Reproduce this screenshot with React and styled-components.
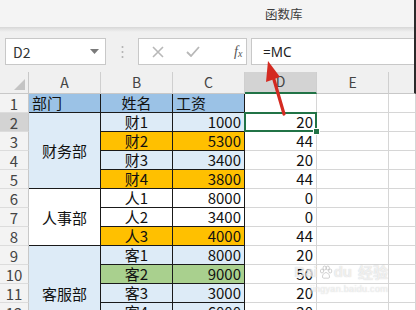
import React from 'react';
import styled, { createGlobalStyle } from 'styled-components';

const BLUE = '#9bc2e6';
const LIGHT = '#ddebf7';
const ORANGE = '#ffc000';
const GREEN = '#a9d08e';
const WHITE = '#ffffff';
const GRID = '#d6d6d6';
const SEL = '#217346';

const GlobalStyle = createGlobalStyle`
  html, body { margin: 0; padding: 0; background: #fff; }
  body { font-family: "Noto Sans CJK SC", "Noto Sans", sans-serif; }
`;

const Page = styled.div`
  position: relative;
  width: 416px;
  height: 310px;
  overflow: hidden;
  display: flex;
  flex-direction: column;
  background: #fff;
`;

const Top = styled.div`
  border-right: 2px solid #2b2b2b;
`;

const Ribbon = styled.div`
  height: 27px;
  background: #f4f4f4;
  border-bottom: 1px solid #d9d9d9;
  display: flex;
  align-items: center;
  padding-left: 265px;
  font-size: 12.5px;
  color: #3c3c3c;
`;

const FormulaBar = styled.div`
  height: 44px;
  box-sizing: border-box;
  padding: 10px 0 0 5px;
  background: linear-gradient(#dcdcdc, #f0f0f0 4px, #f0f0f0);
  display: flex;
  align-items: flex-start;
`;

const Box = styled.div`
  height: 27px;
  box-sizing: border-box;
  background: #fff;
  border: 1px solid #c8c8c8;
  display: flex;
  align-items: center;
`;

const NameBox = styled(Box)`
  width: 101px;
  padding: 0 6px 0 7px;
  justify-content: space-between;
  font-size: 14px;
  color: #333;
`;

const Dots = styled.div`
  width: 32px;
  height: 27px;
  display: flex;
  align-items: center;
  justify-content: center;
`;

const FnBox = styled(Box)`
  width: 109px;
  padding: 0 0 0 13px;
  gap: 22px;
`;

const Fx = styled.span`
  margin-left: 12px;
  font-family: "Liberation Serif", serif;
  font-style: italic;
  font-size: 14px;
  color: #555;
  sub { font-size: 10px; vertical-align: -1px; }
`;

const InputBox = styled(Box)`
  flex: 1;
  margin-left: 4px;
  border-right: none;
  padding-left: 11px;
  font-family: "Noto Sans", sans-serif;
  font-size: 13.5px;
  color: #222;
`;

const Sheet = styled.div`
  display: grid;
  grid-template-columns: 29px repeat(5, 72px) 1fr;
  grid-template-rows: 22px;
  grid-auto-rows: 19px;
`;

const Corner = styled.div`
  background: #f0f0f0;
  border-right: 1px solid #c8c8c8;
  border-bottom: 1px solid #c8c8c8;
  position: relative;
  &::after {
    content: '';
    position: absolute;
    right: 3px;
    bottom: 3px;
    width: 11px;
    height: 11px;
    background: #c4c4c4;
    clip-path: polygon(100% 0, 100% 100%, 0 100%);
  }
`;

const ColHead = styled.div`
  box-sizing: border-box;
  background: ${p => (p.$active ? '#d3d3d3' : '#f0f0f0')};
  border-right: ${p => (p.$edge ? '2px solid #2b2b2b' : '1px solid #cfcfcf')};
  border-bottom: ${p => (p.$active ? `2px solid ${SEL}` : '1px solid #c8c8c8')};
  display: flex;
  align-items: flex-end;
  justify-content: center;
  padding-bottom: 1px;
  font-size: 14px;
  line-height: 19px;
  color: #444;
`;

const RowHead = styled.div`
  box-sizing: border-box;
  background: ${p => (p.$active ? '#d3d3d3' : '#f3f3f3')};
  border-right: 1px solid #c8c8c8;
  border-bottom: 1px solid #dcdcdc;
  text-align: center;
  font-size: 15px;
  line-height: 19px;
  color: #444;
`;

const Cell = styled.div`
  box-sizing: border-box;
  position: relative;
  background: ${p => p.$bg || WHITE};
  border-right: 1px solid ${p => (p.$boxed ? '#1a1a1a' : GRID)};
  border-bottom: 1px solid ${p => (p.$boxed ? '#1a1a1a' : GRID)};
  grid-row: ${p => (p.$span ? `span ${p.$span}` : 'auto')};
  display: flex;
  align-items: ${p => (p.$span ? 'center' : 'flex-end')};
  justify-content: ${p => p.$align || 'flex-start'};
  padding: 0 3px;
  font-size: 15px;
  line-height: 19px;
  color: #111;
  white-space: nowrap;

  ${p => p.$selected && `
    &::before {
      content: '';
      position: absolute;
      inset: -1px;
      border: 2px solid ${SEL};
      z-index: 2;
    }
    &::after {
      content: '';
      position: absolute;
      right: -4px;
      bottom: -4px;
      width: 5px;
      height: 5px;
      background: ${SEL};
      border: 1px solid #fff;
      z-index: 3;
    }
  `}
`;

const Overlay = styled.svg`
  position: absolute;
  left: 0;
  top: 0;
  pointer-events: none;
  z-index: 5;
`;

const Watermark = styled.div`
  position: absolute;
  right: 28px;
  top: 262px;
  z-index: 4;
  white-space: nowrap;
  color: rgba(255, 255, 255, 0.7);
  text-shadow: 0 0 1px rgba(130, 130, 130, 0.45);
  pointer-events: none;
  display: flex;
  flex-direction: column;
  align-items: flex-end;
`;

const MarkTop = styled.div`
  display: flex;
  align-items: center;
  gap: 1px;
  font-family: "Liberation Sans", sans-serif;
  font-weight: bold;
  font-size: 15px;
  line-height: 20px;
`;

const MarkCn = styled.span`
  font-family: "Noto Sans CJK SC", sans-serif;
  font-weight: bold;
  font-size: 15px;
  margin-left: 5px;
`;

const MarkUrl = styled.div`
  font-family: "Liberation Sans", sans-serif;
  font-size: 9px;
  letter-spacing: 0.3px;
  margin-top: 2px;
`;

const groups = {
  2: { dept: '财务部', bg: LIGHT, span: 4 },
  6: { dept: '人事部', bg: WHITE, span: 3 },
  9: { dept: '客服部', bg: LIGHT, span: 5 },
};

const people = [
  ['财1', 1000, 20, LIGHT],
  ['财2', 5300, 44, ORANGE],
  ['财3', 3400, 20, LIGHT],
  ['财4', 3800, 44, ORANGE],
  ['人1', 8000, 0, WHITE],
  ['人2', 3400, 0, WHITE],
  ['人3', 4000, 44, ORANGE],
  ['客1', 8000, 20, LIGHT],
  ['客2', 9000, 50, GREEN],
  ['客3', 3000, 20, LIGHT],
  ['客4', 6000, 20, LIGHT],
  ['客5', 5000, 20, LIGHT],
];

function Paw() {
  return (
    <svg width="14" height="14" viewBox="0 0 14 14">
      <g fill="rgba(255,255,255,0.6)" stroke="rgba(130,130,130,0.45)" strokeWidth="0.8">
        <ellipse cx="3" cy="6" rx="1.6" ry="2" />
        <ellipse cx="5.6" cy="3" rx="1.6" ry="2" />
        <ellipse cx="8.8" cy="3" rx="1.6" ry="2" />
        <ellipse cx="11.2" cy="6" rx="1.6" ry="2" />
        <path d="M7 7.5c-2 0-4 3-3.5 4.8.5 1.4 2.4.8 3.5.8s3 .6 3.5-.8C11 10.5 9 7.5 7 7.5z" />
      </g>
    </svg>
  );
}

export default function App() {
  return (
    <>
      <GlobalStyle />
      <Page>
        <Top>
          <Ribbon>函数库</Ribbon>
          <FormulaBar>
            <NameBox>
              <span>D2</span>
              <svg width="9" height="5" viewBox="0 0 9 5">
                <polygon points="0,0 9,0 4.5,5" fill="#7a7a7a" />
              </svg>
            </NameBox>
            <Dots>
              <svg width="3" height="14" viewBox="0 0 3 14">
                <circle cx="1.5" cy="2" r="1" fill="#b0b0b0" />
                <circle cx="1.5" cy="7" r="1" fill="#b0b0b0" />
                <circle cx="1.5" cy="12" r="1" fill="#b0b0b0" />
              </svg>
            </Dots>
            <FnBox>
              <svg width="12" height="12" viewBox="0 0 12 12">
                <path d="M1 1L11 11M11 1L1 11" stroke="#b8b8b8" strokeWidth="1.6" />
              </svg>
              <svg width="14" height="11" viewBox="0 0 14 11">
                <path d="M1 6l4 4L13 1" fill="none" stroke="#b8b8b8" strokeWidth="1.8" />
              </svg>
              <Fx>f<sub>x</sub></Fx>
            </FnBox>
            <InputBox>=MC</InputBox>
          </FormulaBar>
        </Top>

        <Sheet>
          <Corner />
          {['A', 'B', 'C', 'D', 'E'].map(c => (
            <ColHead key={c} $active={c === 'D'}>{c}</ColHead>
          ))}
          <ColHead $edge />

          <RowHead>1</RowHead>
          <Cell $boxed $bg={BLUE}>部门</Cell>
          <Cell $boxed $bg={BLUE} $align="center">姓名</Cell>
          <Cell $boxed $bg={BLUE}>工资</Cell>
          <Cell />
          <Cell />
          <Cell />

          {people.map(([name, pay, d, bg], i) => {
            const r = i + 2;
            const g = groups[r];
            return (
              <React.Fragment key={r}>
                <RowHead $active={r === 2}>{r}</RowHead>
                {g && (
                  <Cell $boxed $bg={g.bg} $span={g.span} $align="center">{g.dept}</Cell>
                )}
                <Cell $boxed $bg={bg} $align="center">{name}</Cell>
                <Cell $boxed $bg={bg} $align="flex-end">{pay}</Cell>
                <Cell $align="flex-end" $selected={r === 2}>{d}</Cell>
                <Cell />
                <Cell />
              </React.Fragment>
            );
          })}
        </Sheet>

        <Watermark>
          <MarkTop>
            <span>Bai</span>
            <Paw />
            <span>du</span>
            <MarkCn>经验</MarkCn>
          </MarkTop>
          <MarkUrl>jingyan.baidu.com</MarkUrl>
        </Watermark>

        <Overlay width="416" height="310" viewBox="0 0 416 310">
          <line x1="284" y1="114" x2="273.5" y2="78" stroke="#d42a21" strokeWidth="3.2" strokeLinecap="round" />
          <polygon points="268,61 280,77 266,82" fill="#d42a21" />
        </Overlay>
      </Page>
    </>
  );
}
